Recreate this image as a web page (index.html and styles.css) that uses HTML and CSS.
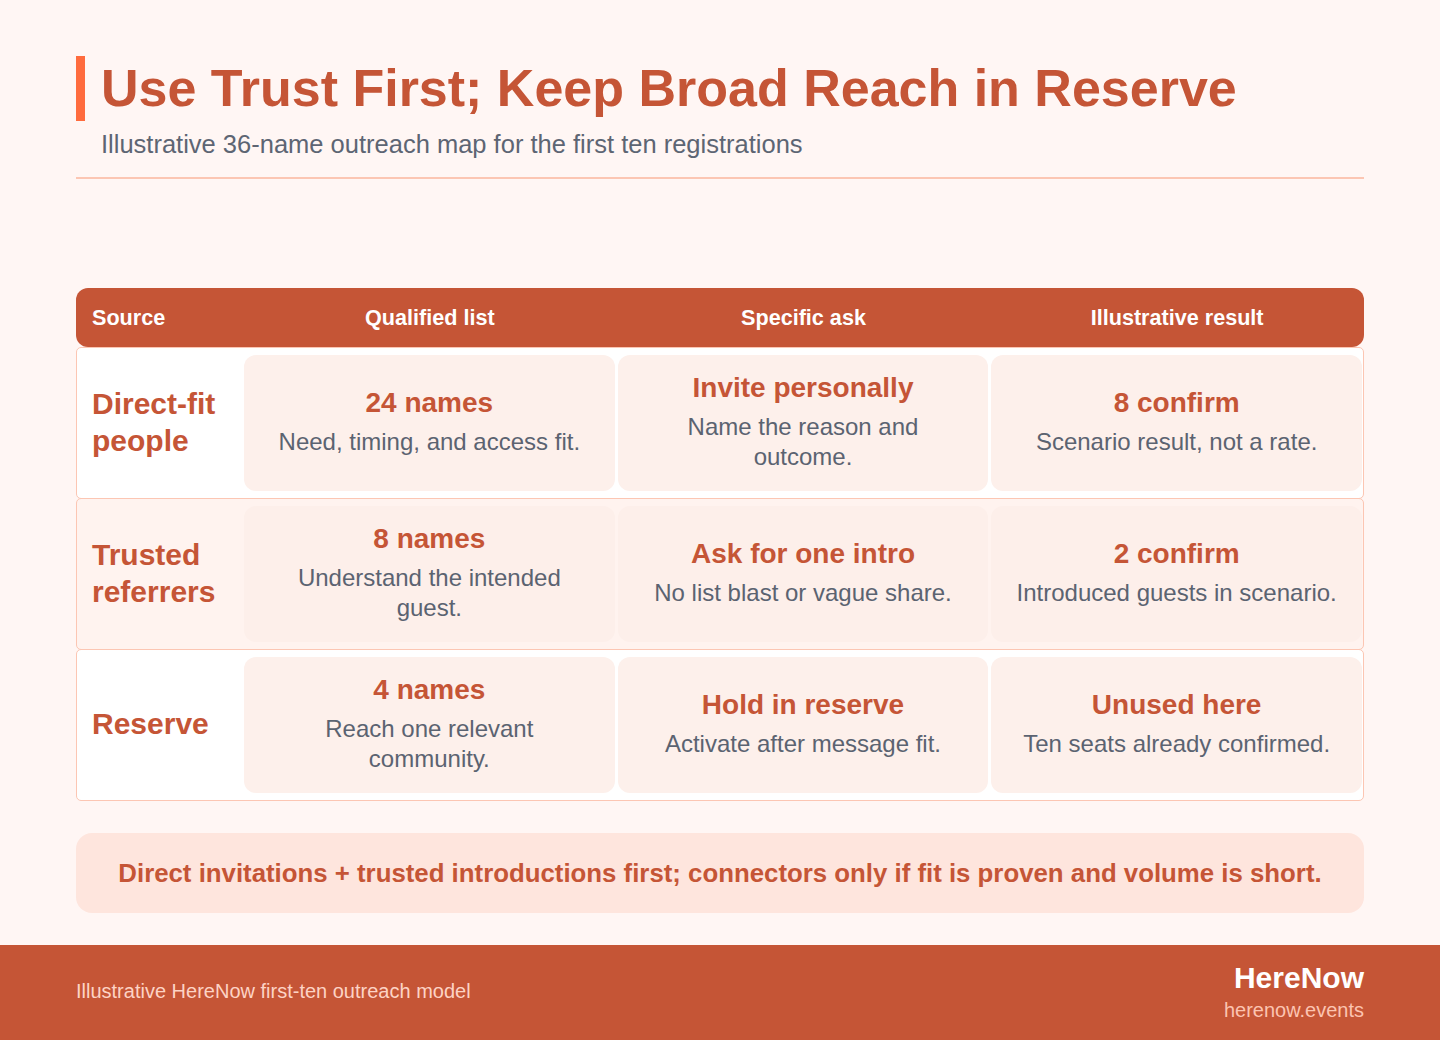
FILE: index.html
```html
<!DOCTYPE html>
<html lang="en">
<head>
<meta charset="utf-8">
<title>Use Trust First; Keep Broad Reach in Reserve</title>
<link rel="stylesheet" href="styles.css">
</head>
<body>
<div class="page">
  <header class="head">
    <h1 class="title">Use Trust First; Keep Broad Reach in Reserve</h1>
    <p class="subtitle">Illustrative 36-name outreach map for the first ten registrations</p>
  </header>
  <div class="divider"></div>

  <section class="table">
    <div class="thead">
      <div class="th th-left">Source</div>
      <div class="th">Qualified list</div>
      <div class="th">Specific ask</div>
      <div class="th">Illustrative result</div>
    </div>

    <div class="row">
      <div class="label">Direct-fit<br>people</div>
      <div class="card"><div class="ct">24 names</div><div class="cd">Need, timing, and access fit.</div></div>
      <div class="card"><div class="ct">Invite personally</div><div class="cd">Name the reason and outcome.</div></div>
      <div class="card"><div class="ct">8 confirm</div><div class="cd">Scenario result, not a rate.</div></div>
    </div>

    <div class="row row-alt">
      <div class="label">Trusted<br>referrers</div>
      <div class="card"><div class="ct">8 names</div><div class="cd">Understand the intended guest.</div></div>
      <div class="card"><div class="ct">Ask for one intro</div><div class="cd">No list blast or vague share.</div></div>
      <div class="card"><div class="ct">2 confirm</div><div class="cd">Introduced guests in scenario.</div></div>
    </div>

    <div class="row">
      <div class="label">Reserve</div>
      <div class="card"><div class="ct">4 names</div><div class="cd">Reach one relevant community.</div></div>
      <div class="card"><div class="ct">Hold in reserve</div><div class="cd">Activate after message fit.</div></div>
      <div class="card"><div class="ct">Unused here</div><div class="cd">Ten seats already confirmed.</div></div>
    </div>
  </section>

  <div class="callout">Direct invitations + trusted introductions first; connectors only if fit is proven and volume is short.</div>
</div>

<footer class="footer">
  <div class="foot-left">Illustrative HereNow first-ten outreach model</div>
  <div class="foot-right">
    <div class="brand">HereNow</div>
    <div class="site">herenow.events</div>
  </div>
</footer>
</body>
</html>
```

FILE: styles.css
```css
* { box-sizing: border-box; }

html, body {
  margin: 0;
  padding: 0;
}

body {
  background: #fff6f4;
  font-family: "Liberation Sans", Arial, sans-serif;
  color: #5b6371;
  width: 1440px;
  height: 1040px;
  overflow: hidden;
}

.page {
  padding: 56px 76px 0;
}

.head {
  display: flex;
  flex-direction: column;
}

.title {
  margin: 0;
  border-left: 9px solid #ff6b3d;
  padding-left: 16px;
  font-size: 52px;
  line-height: 65px;
  font-weight: 700;
  color: #c55536;
}

.subtitle {
  margin: 8px 0 0;
  padding-left: 25px;
  font-size: 25.5px;
  line-height: 30px;
  color: #5d6573;
}

.divider {
  margin-top: 18px;
  height: 2px;
  background: #fcc6b3;
}

.table {
  margin-top: 109px;
}

.thead {
  display: grid;
  grid-template-columns: 167px repeat(3, 1fr);
  height: 59px;
  align-items: center;
  background: #c55536;
  border-radius: 12px;
  color: #ffffff;
}

.th {
  font-size: 21.6px;
  font-weight: 700;
  text-align: center;
}

.th-left {
  text-align: left;
  padding-left: 16px;
}

.row {
  display: grid;
  grid-template-columns: 164px repeat(3, 1fr);
  column-gap: 3px;
  height: 152px;
  padding: 7px 1px 7px 0;
  background: #ffffff;
  border: 1px solid #fcc6b3;
  border-radius: 5px;
  margin-top: -1px;
}

.thead + .row {
  margin-top: 0;
}

.row-alt {
  background: #fff3ef;
}

.label {
  display: flex;
  align-items: center;
  padding: 0 0 3px 15px;
  font-size: 30px;
  line-height: 37px;
  font-weight: 700;
  color: #c55536;
}

.card {
  background: #fdf0eb;
  border-radius: 12px;
  display: flex;
  flex-direction: column;
  align-items: center;
  justify-content: center;
  text-align: center;
  padding: 0 24px 3px;
}

.row-alt .card {
  background: #fdefea;
}

.ct {
  font-size: 28px;
  line-height: 34px;
  font-weight: 700;
  color: #c55536;
}

.cd {
  margin-top: 7px;
  font-size: 24px;
  line-height: 30px;
  color: #5b6371;
}

.callout {
  margin-top: 32px;
  height: 80px;
  display: flex;
  align-items: center;
  justify-content: center;
  background: #fee5dd;
  border-radius: 16px;
  font-size: 25.8px;
  font-weight: 700;
  color: #c55536;
}

.footer {
  margin-top: 32px;
  height: 96px;
  background: #c55536;
  padding: 0 76px;
  display: flex;
  justify-content: space-between;
  align-items: center;
}

.foot-left {
  font-size: 20px;
  color: #fdd3c5;
  margin-top: -4px;
}

.foot-right {
  text-align: right;
}

.brand {
  font-size: 30px;
  line-height: 34px;
  font-weight: 700;
  color: #ffffff;
}

.site {
  font-size: 20px;
  line-height: 30px;
  color: #fcc4b1;
}
```
